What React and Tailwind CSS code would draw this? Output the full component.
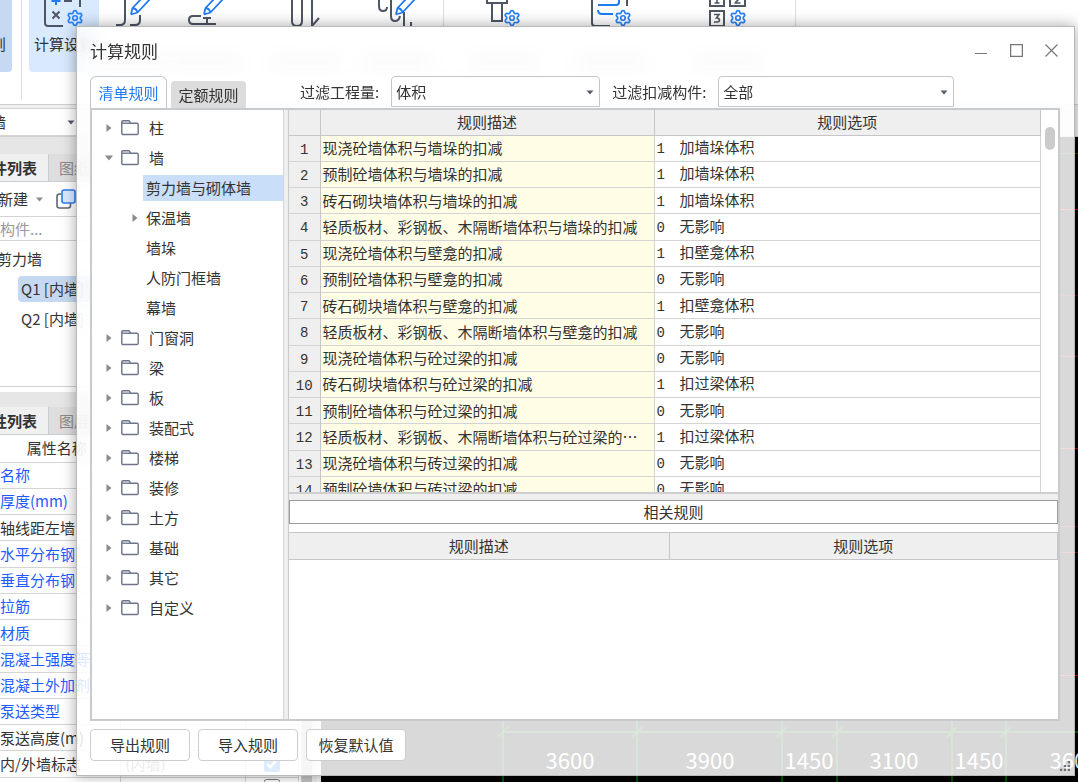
import React from "react";
import { Settings } from "lucide-react";

const TREE = [
  { label: "柱", state: "closed" },
  {
    label: "墙",
    state: "open",
    children: [
      { label: "剪力墙与砌体墙", selected: true },
      { label: "保温墙", state: "closed" },
      { label: "墙垛" },
      { label: "人防门框墙" },
      { label: "幕墙" },
    ],
  },
  { label: "门窗洞", state: "closed" },
  { label: "梁", state: "closed" },
  { label: "板", state: "closed" },
  { label: "装配式", state: "closed" },
  { label: "楼梯", state: "closed" },
  { label: "装修", state: "closed" },
  { label: "土方", state: "closed" },
  { label: "基础", state: "closed" },
  { label: "其它", state: "closed" },
  { label: "自定义", state: "closed" },
];

const RULES = [
  ["现浇砼墙体积与墙垛的扣减", 1, "加墙垛体积"],
  ["预制砼墙体积与墙垛的扣减", 1, "加墙垛体积"],
  ["砖石砌块墙体积与墙垛的扣减", 1, "加墙垛体积"],
  ["轻质板材、彩钢板、木隔断墙体积与墙垛的扣减", 0, "无影响"],
  ["现浇砼墙体积与壁龛的扣减", 1, "扣壁龛体积"],
  ["预制砼墙体积与壁龛的扣减", 0, "无影响"],
  ["砖石砌块墙体积与壁龛的扣减", 1, "扣壁龛体积"],
  ["轻质板材、彩钢板、木隔断墙体积与壁龛的扣减", 0, "无影响"],
  ["现浇砼墙体积与砼过梁的扣减", 0, "无影响"],
  ["砖石砌块墙体积与砼过梁的扣减", 1, "扣过梁体积"],
  ["预制砼墙体积与砼过梁的扣减", 0, "无影响"],
  ["轻质板材、彩钢板、木隔断墙体积与砼过梁的⋯", 1, "扣过梁体积"],
  ["现浇砼墙体积与砖过梁的扣减", 0, "无影响"],
  ["预制砼墙体积与砖过梁的扣减", 0, "无影响"],
];

const PROPS = [
  { name: "名称", link: true },
  { name: "厚度(mm)", link: true },
  { name: "轴线距左墙" },
  { name: "水平分布钢", link: true },
  { name: "垂直分布钢", link: true },
  { name: "拉筋", link: true },
  { name: "材质", link: true },
  { name: "混凝土强度等", link: true },
  { name: "混凝土外加剂", link: true },
  { name: "泵送类型", link: true },
  { name: "泵送高度(m)" },
  { name: "内/外墙标志", value: "(内墙)", check: true, checked: true },
  { name: "", check: true },
];

function Arrow({ open }) {
  return (
    <svg width="10" height="10" viewBox="0 0 10 10" fill="#8a8a8a" aria-hidden="true">
      {open ? <path d="M1 2.5h8L5 7.5z" /> : <path d="M2.5 1v8L7.5 5z" />}
    </svg>
  );
}

function Folder() {
  return (
    <svg width="18" height="16" viewBox="0 0 18 16" fill="none" stroke="#6b7489" strokeWidth="1.4" aria-hidden="true">
      <path d="M.8 13.2V2q0-1.2 1.2-1.2h5.6q.7 0 1 .6l.9 1.8h6.4q1.3 0 1.3 1.3v8.7q0 1.3-1.3 1.3H2.1Q.8 14.500.8 13.200z" />
      <path d="M.8 3.200h9" />
    </svg>
  );
}

function Caret() {
  return (
    <svg width="8" height="5" viewBox="0 0 8 5" fill="#565d6b" aria-hidden="true">
      <path d="M.5.500h7L4 4.500z" />
    </svg>
  );
}

function TreeRow({ node, child }) {
  return (
    <div className={child ? "flex h-[30px] items-center pl-[38px]" : "flex h-[30px] items-center pl-3"}>
      <span className="flex w-[13px] shrink-0">{node.state && <Arrow open={node.state === "open"} />}</span>
      {!child && (
        <span className="ml-1 mr-[9px]">
          <Folder />
        </span>
      )}
      <button
        type="button"
        className={
          node.selected
            ? "h-[26px] flex-1 bg-[#c9dff9] pl-[3px] text-left"
            : child
              ? "h-[26px] pl-[3px] text-left"
              : "h-[26px] pl-px text-left"
        }
      >
        {node.label}
      </button>
    </div>
  );
}

function Select({ id, label, value, className }) {
  return (
    <>
      <label htmlFor={id} className="shrink-0">{label}</label>
      <div className={className}>
        <select
          id={id}
          defaultValue={value}
          className="h-[31px] w-full appearance-none rounded-t border border-[#c6c6c6] bg-white pl-1 outline-none"
        >
          <option>{value}</option>
        </select>
        <span className="pointer-events-none absolute right-[6px] top-[14px]">
          <Caret />
        </span>
      </div>
    </>
  );
}

function RibbonItem({ className, children }) {
  return (
    <div className={className}>
      <svg width="44" height="28" viewBox="0 0 44 28" fill="none" stroke="#4e5564" strokeWidth="2" aria-hidden="true">
        {children}
      </svg>
      <span className="mt-7 h-3 w-full rounded bg-neutral-300" />
    </div>
  );
}

function Pencil({ x }) {
  return (
    <g transform={`translate(${x} 0)`} stroke="#1f7bf2" strokeWidth="1.8" strokeLinejoin="round">
      <path d="M0 14.500 1.500 8 13-4M0 14.500 6.500 12.500 20-2M1.500 8q4 .5 5 4.500" />
    </g>
  );
}

function Gear({ x }) {
  return <Settings x={x} y="9" width="18" height="18" color="#2b83f3" strokeWidth={2.3} />;
}

function Ribbon() {
  const item = "flex w-[70px] shrink-0 flex-col items-center";
  return (
    <div className="flex h-[105px] shrink-0 overflow-hidden border-b border-[#cfcfcf] bg-white">
      <button type="button" className="flex h-[72px] w-3 shrink-0 justify-end rounded-br bg-[#c5daf2] pr-[6px] pt-[33px]">
        则
      </button>
      <span className="ml-[9px] mr-[7px] h-[100px] w-px shrink-0 bg-[#dedede]" />
      <button type="button" className="flex h-[72px] w-[70px] shrink-0 flex-col items-center rounded-b bg-[#d9eaff]">
        <svg width="44" height="33" viewBox="0 0 44 33" fill="none" stroke="#4e5564" strokeWidth="2" aria-hidden="true">
          <path d="M3 0v23q0 3 3 3h15M38 0v7" />
          <path d="M22 1h8M10.500 11.500l7 7M17.500 11.500l-7 7" />
          <path d="M14 0v5M9.500 1h9" stroke="#1f7bf2" />
          <Gear x="24" />
        </svg>
        <span>计算设置</span>
      </button>
      <RibbonItem className={item}>
        <path d="M13 0v20q0 5-5 5H4M28 15v5q0 5-5 5h-5" />
        <Pencil x={19} />
      </RibbonItem>
      <RibbonItem className={item + " ml-[3px]"}>
        <path d="M16 16H8q-4 0-4 4t4 4h23M22 24v-6M18 18h8" />
        <Pencil x={19} />
      </RibbonItem>
      <RibbonItem className={item + " ml-[28px]"}>
        <path d="M9 0v21q0 5 5 5t5-5V0M29 0v26l7-8" />
      </RibbonItem>
      <RibbonItem className={item + " ml-[22px]"}>
        <path d="M4 0v6q0 5 4 5t4-4M16 0v16q0 5 4 5t5-5M29 12v14M36 22v4" />
        <Pencil x={21} />
      </RibbonItem>
      <span className="ml-[11px] mr-[25px] h-[100px] w-px shrink-0 bg-[#dedede]" />
      <RibbonItem className={item}>
        <path d="M5 0v3h20V0M10 4v17h10V4" />
        <Gear x="21" />
      </RibbonItem>
      <RibbonItem className={item + " ml-[37px]"}>
        <path d="M3 0v23q0 3 3 3h15M38 0v6" />
        <path d="M9 5h18q3 0 3-3V0M9 10q0 4 4 4h11" stroke="#1f7bf2" />
        <Gear x="25" />
      </RibbonItem>
      <RibbonItem className={item + " ml-[47px]"}>
        <path d="M4 0v6h14V0M24 0v6h15V0M4 11h14v15H4z" />
        <path d="M11 0v3M8.500 3h5M28.500 3h6M29 3l4-4" strokeWidth="1.6" />
        <path d="M8 14.500h5l-2.500 3.500q3 0 3 2.200T8 22" strokeWidth="1.6" />
        <Gear x="23" />
      </RibbonItem>
      <span className="ml-[32px] h-[100px] w-px shrink-0 bg-[#dedede]" />
    </div>
  );
}

function PanelTabs({ first, second }) {
  return (
    <div className="flex h-[28px] shrink-0 border-b border-[#c9ced3] bg-[#dedede]">
      <button type="button" className="flex w-[49px] items-center justify-end overflow-hidden whitespace-nowrap border-r border-[#c9ced3] bg-[#f0f0f0] pr-[11px] font-bold">
        {first}
      </button>
      <button type="button" className="pl-[10px] text-[#8a8a8a]">{second}</button>
    </div>
  );
}

function LeftPanel() {
  return (
    <aside className="flex w-[302px] shrink-0 flex-col overflow-hidden border-r border-[#d0d0d0] bg-white">
      <div className="h-[17px] shrink-0 bg-[#e6e6e6]" />
      <PanelTabs first="构件列表" second="图纸管理" />
      <div className="flex h-[35px] shrink-0 items-center border-b border-[#d4d4d4]">
        <button type="button" className="-ml-[2px] flex items-center gap-2">
          新建
          <svg width="7" height="5" viewBox="0 0 7 5" fill="#8a8a8a" aria-hidden="true"><path d="M0 .5h7L3.500 4.500z" /></svg>
        </button>
        <svg className="ml-[13px]" width="20" height="20" viewBox="0 0 20 20" fill="none" strokeWidth="1.6" aria-hidden="true">
          <path d="M5 5H3.500Q1 5 1 7.500v9Q1 19 3.500 19h8.500q2.500 0 2.500-2.500V14" stroke="#5f6675" />
          <rect x="6" y="1" width="13" height="13" rx="2" fill="#d9eaff" stroke="#2b7df0" />
        </svg>
      </div>
      <div className="h-[24px] shrink-0 border-b border-[#d4d4d4]">
        <input aria-label="搜索构件" placeholder="搜索构件..." className="-ml-[30px] h-full w-[300px] outline-none placeholder:text-[#999]" />
      </div>
      <div className="flex h-[146px] shrink-0 flex-col border-b border-[#d0d0d0] pt-[3px]">
        <div className="-ml-[3px] flex h-[30px] items-center">剪力墙</div>
        <div className="flex h-[30px] items-center pl-[18px]">
          <span className="h-[26px] flex-1 rounded-l bg-[#c5daf2] pl-[3px] leading-[26px]">Q1 [内墙]</span>
        </div>
        <div className="flex h-[30px] items-center pl-[21px]">Q2 [内墙]</div>
      </div>
      <div className="mt-[5px] h-[15px] shrink-0 bg-[#e6e6e6]" />
      <PanelTabs first="属性列表" second="图层管理" />
      <table className="h-[362px] w-[298px] shrink-0 table-fixed border-collapse whitespace-nowrap">
        <colgroup>
          <col className="w-[120px]" />
          <col className="w-[125px]" />
          <col className="w-[53px]" />
        </colgroup>
        <thead>
          <tr className="h-[27px] border-b border-[#d4d4d4]">
            <th className="h-[27px] border-r border-[#d4d4d4] p-0 pr-[6px] font-normal">属性名称</th>
            <th className="border-r border-[#d4d4d4] p-0" aria-label="属性值" />
            <th className="p-0" aria-label="附加" />
          </tr>
        </thead>
        <tbody>
          {PROPS.map((p, i) => (
            <tr key={i} className="border-b border-[#d4d4d4]">
              <td className={p.link ? "overflow-hidden border-r border-[#d4d4d4] p-0 text-[#1f5cff]" : "overflow-hidden border-r border-[#d4d4d4] p-0"}>
                {p.name}
              </td>
              <td className="border-r border-[#d4d4d4] p-0 pl-[5px] text-[#777]">{p.value}</td>
              <td className="border-r border-[#d4d4d4] p-0">
                {p.check && (
                  <input type="checkbox" aria-label={p.name || "附加"} defaultChecked={p.checked} className="mx-auto block size-4 accent-[#1f7bf2]" />
                )}
              </td>
            </tr>
          ))}
        </tbody>
      </table>
    </aside>
  );
}

const GRID_X = [182, 316, 461, 516, 631, 685];
const DIMS = [[249, "3600"], [389, "3900"], [488, "1450"], [573, "3100"], [658, "1450"], [753, "3600"]];
const RED_Y = [[72, 1], [158, 0.4], [219, 0.6], [311, 0.8], [389, 0.5], [415, 0.6], [538, 1]];

function Canvas() {
  return (
    <div className="min-w-0 flex-1 overflow-hidden bg-black">
      <svg width="100%" height="100%" aria-hidden="true">
        {RED_Y.map(([y, o]) => (
          <line key={y} x1="700" x2="100%" y1={y + 0.5} y2={y + 0.5} stroke="#f00" strokeOpacity={o} />
        ))}
        <line x1="700" x2="100%" y1="16.5" y2="16.5" stroke="#005000" />
        <line x1="182" x2="100%" y1="595" y2="595" stroke="#007800" strokeWidth="1.5" />
        {GRID_X.map((x) => (
          <g key={x} stroke="#006a00" strokeWidth="1.5">
            <line x1={x} x2={x} y1="582" y2="100%" />
            <line x1={x - 5} x2={x + 5} y1="600" y2="590" />
          </g>
        ))}
        {DIMS.map(([x, t]) => (
          <text key={x} x={x} y="632" textAnchor="middle" fontSize="22" fill="#fff">{t}</text>
        ))}
      </svg>
    </div>
  );
}

function RuleTable() {
  return (
    <div className="flex h-[384px] shrink-0 overflow-hidden border-b-2 border-[#cfcfcf] bg-white">
      <table className="h-[393px] min-w-0 flex-1 table-fixed border-collapse">
        <colgroup>
          <col className="w-[31px]" />
          <col className="w-[334px]" />
          <col />
        </colgroup>
        <thead>
          <tr className="h-[25px] border-b border-[#c6c6c6] bg-[#efefef]">
            <th className="h-[25px] border-r border-[#c6c6c6] p-0" aria-label="序号" />
            <th className="border-r border-[#c6c6c6] p-0 font-normal">规则描述</th>
            <th className="border-r border-[#c6c6c6] p-0 font-normal">规则选项</th>
          </tr>
        </thead>
        <tbody>
          {RULES.map(([desc, code, option], i) => (
            <tr key={i} className="border-b border-[#d4d4d4]">
              <td className="border-r border-[#c6c6c6] bg-[#efefef] p-0 pt-[3px] text-center font-['Liberation_Mono',monospace] text-[14px]">
                {i + 1}
              </td>
              <td className="whitespace-nowrap border-r border-[#d4d4d4] bg-[#fffde6] p-0 pl-[2px]">{desc}</td>
              <td className="whitespace-nowrap border-r border-[#d4d4d4] p-0 pl-[2px]">
                <span className="inline-block w-[23px] font-['Liberation_Mono',monospace] text-[14px]">{code}</span>
                {option}
              </td>
            </tr>
          ))}
        </tbody>
      </table>
      <div className="flex w-[17px] shrink-0 justify-center pt-[17px]">
        <span className="h-[23px] w-[10px] rounded-full bg-[#cbcbcb]" />
      </div>
    </div>
  );
}

function Dialog() {
  const action = "h-8 rounded border border-[#cdcdcd] bg-white text-center";
  return (
    <section
      role="dialog"
      aria-label="计算规则"
      className="absolute bottom-[6px] left-[76px] right-[3px] top-[26px] flex flex-col border border-[#b9b9b9] bg-white/85 shadow-[0_0_14px_rgba(0,0,0,0.35)]"
    >
      <header className="flex h-[49px] shrink-0 items-center justify-between pb-[2px] pl-[13px] pr-[16px] backdrop-blur-sm">
        <h1 className="text-[17px]">计算规则</h1>
        <div className="flex gap-[22px] text-[#777]">
          <button type="button" aria-label="最小化">
            <svg width="13" height="13" viewBox="0 0 13 13" fill="none" stroke="currentColor" aria-hidden="true"><path d="M0 9.500h12" /></svg>
          </button>
          <button type="button" aria-label="最大化">
            <svg width="13" height="13" viewBox="0 0 13 13" fill="none" stroke="currentColor" strokeWidth="1.3" aria-hidden="true"><rect x=".6" y=".6" width="11.800" height="11.800" /></svg>
          </button>
          <button type="button" aria-label="关闭">
            <svg width="13" height="13" viewBox="0 0 13 13" fill="none" stroke="currentColor" strokeWidth="1.2" aria-hidden="true"><path d="M.5.500l12 12M12.500.500l-12 12" /></svg>
          </button>
        </div>
      </header>

      <div className="flex h-8 shrink-0 items-end px-[13px] backdrop-blur-sm">
        <div className="flex items-end gap-1" role="tablist">
          <button type="button" role="tab" aria-selected="true" className="h-8 w-[77px] rounded-t-md border border-b-0 border-[#c3c8cd] bg-white text-[#1f7bf2]">
            清单规则
          </button>
          <button type="button" role="tab" aria-selected="false" className="h-[27px] w-[75px] rounded-t bg-[#dcdcdc]">
            定额规则
          </button>
        </div>
        <div className="ml-[54px] flex min-w-0 flex-1 items-center gap-3 pb-px">
          <Select id="quantity" label="过滤工程量:" value="体积" className="relative w-[209px]" />
          <Select id="component" label="过滤扣减构件:" value="全部" className="relative w-[236px]" />
        </div>
      </div>

      <div className="ml-[13px] mr-[14px] flex min-h-0 flex-1 border-2 border-[#c8cbce] bg-[#efefef]">
        <nav className="w-[191px] shrink-0 overflow-hidden bg-white pt-[3px]">
          {TREE.map((node) => (
            <React.Fragment key={node.label}>
              <TreeRow node={node} />
              {node.children?.map((c) => <TreeRow key={c.label} node={c} child />)}
            </React.Fragment>
          ))}
        </nav>
        <div className="w-[6px] shrink-0 border-x border-l-[#d3d5d7] border-r-[#c8cbce]" />
        <div className="flex min-w-0 flex-1 flex-col">
          <RuleTable />
          <div className="mt-[6px] h-[24px] shrink-0 border border-[#9c9c9c] bg-white text-center leading-[22px]">相关规则</div>
          <div className="min-h-0 flex-1 bg-white pt-[8px]">
            <table className="w-full table-fixed border-collapse">
              <thead>
                <tr className="h-[27px] border-y border-[#c6c6c6] bg-[#efefef]">
                  <th className="w-[380px] border-r border-[#c6c6c6] p-0 font-normal">规则描述</th>
                  <th className="border-r border-[#c6c6c6] p-0 font-normal">规则选项</th>
                </tr>
              </thead>
            </table>
          </div>
        </div>
      </div>

      <footer className="flex h-[54px] shrink-0 items-start gap-2 px-[13px] pt-[8px]">
        <button type="button" className={action + " w-[100px]"}>导出规则</button>
        <button type="button" className={action + " w-[100px]"}>导入规则</button>
        <button type="button" className={action + " w-[100px]"}>恢复默认值</button>
        <svg className="ml-auto mr-[-9px] mt-auto mb-1" width="10" height="10" viewBox="0 0 9 9" fill="#6a6f78" aria-hidden="true">
          <path d="M7 0h2v2H7zM3.500 3.500h2v2h-2zM7 3.500h2v2H7zM0 7h2v2H0zM3.500 7h2v2h-2zM7 7h2v2H7z" />
        </svg>
      </footer>
      <div className="pointer-events-none absolute left-0 top-[81px] h-[517px] w-[13px] backdrop-blur-sm" />
    </section>
  );
}

export default function App() {
  return (
    <div
      lang="zh-CN"
      className="relative flex h-screen flex-col overflow-hidden bg-[#f0f0f0] font-['Noto_Sans_CJK_SC',sans-serif] text-[15px] leading-[22px] text-[#333]"
    >
      <Ribbon />
      <div className="flex h-8 shrink-0 items-end border-b border-[#cfcfcf]">
        <button type="button" className="flex h-[28px] w-[80px] items-center justify-between border-y border-[#d4d4d4] bg-white pr-[5px]">
          <span className="-ml-[9px]">墙</span>
          <Caret />
        </button>
      </div>
      <div className="flex min-h-0 flex-1">
        <LeftPanel />
        <div className="w-[19px] shrink-0 border-r-4 border-[#f4f4f4] bg-[#ececec]">
          <div className="h-full w-[10px] bg-[#c4c4c4]" />
        </div>
        <Canvas />
      </div>
      <Dialog />
    </div>
  );
}
